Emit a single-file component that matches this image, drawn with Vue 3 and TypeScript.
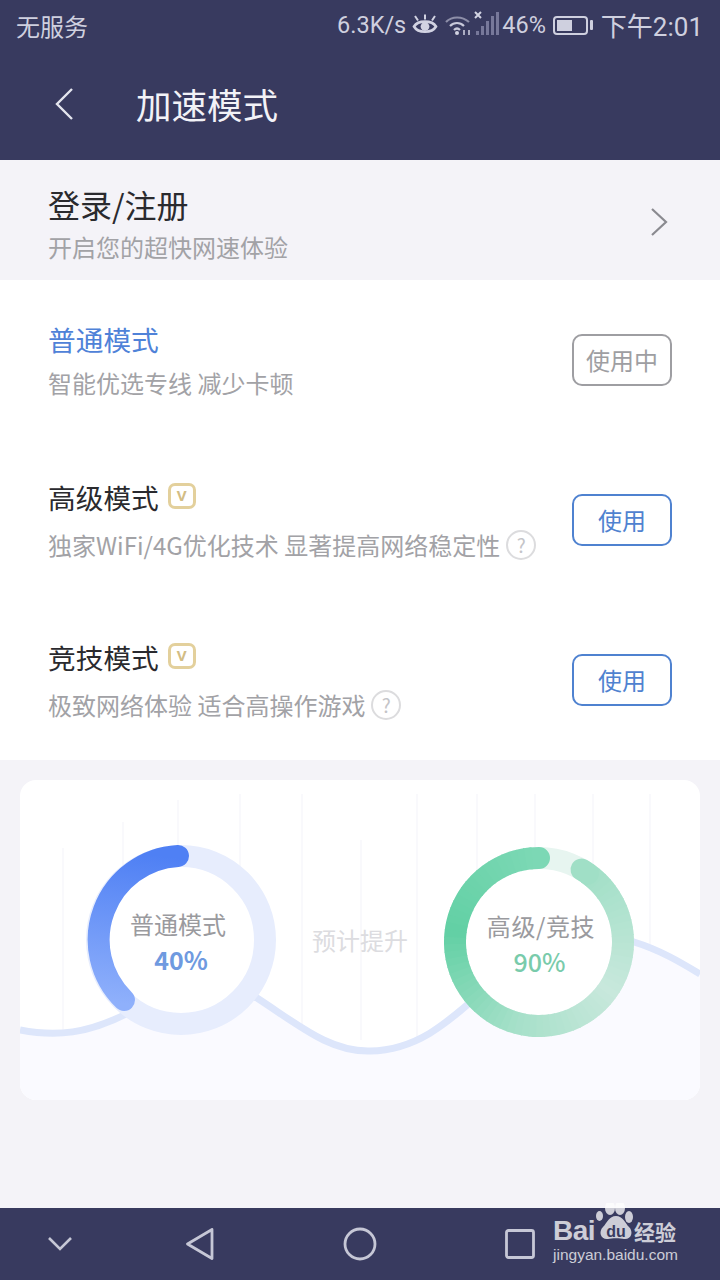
<script setup lang="ts">
interface Mode { title: string; sub: string; btn: string; active: boolean; vip: boolean; help: boolean }
const modes: Mode[] = [
  { title: '普通模式', sub: '智能优选专线 减少卡顿', btn: '使用中', active: true, vip: false, help: false },
  { title: '高级模式', sub: '独家WiFi/4G优化技术 显著提高网络稳定性', btn: '使用', active: false, vip: true, help: true },
  { title: '竞技模式', sub: '极致网络体验 适合高操作游戏', btn: '使用', active: false, vip: true, help: true }
]

type RGB = [number, number, number]
const stops: [number, RGB][] = [
  [0, [124, 216, 181]],
  [0.25, [98, 208, 164]],
  [0.5, [166, 224, 201]],
  [0.72, [200, 232, 220]],
  [1, [160, 223, 198]]
]
function colorAt(t: number): string {
  for (let i = 1; i < stops.length; i++) {
    if (t <= stops[i][0]) {
      const a = stops[i - 1]
      const b = stops[i]
      const k = (t - a[0]) / (b[0] - a[0])
      const c = a[1].map((v, j) => Math.round(v + (b[1][j] - v) * k))
      return `rgb(${c[0]},${c[1]},${c[2]})`
    }
  }
  return 'rgb(160,223,198)'
}
function polar(deg: number, r: number): [number, number] {
  const a = (deg * Math.PI) / 180
  return [96 + r * Math.sin(a), 96 - r * Math.cos(a)]
}
// Counter-clockwise from just after the top round to the upper right
const startDeg = 0
const sweep = 329
const n = 72
const greenSegs = Array.from({ length: n }, (_, i) => {
  const d1 = startDeg - (sweep * i) / n
  const d2 = startDeg - (sweep * (i + 1)) / n - 0.6
  const p1 = polar(d1, 84)
  const p2 = polar(d2, 84)
  return {
    d: `M${p1[0].toFixed(2)} ${p1[1].toFixed(2)}A84 84 0 0 0 ${p2[0].toFixed(2)} ${p2[1].toFixed(2)}`,
    color: colorAt(i / (n - 1)),
    cap: i === 0 || i === n - 1 ? 'round' : 'butt'
  }
})
const gridLines = [
  { x: 43, y: 68 }, { x: 103, y: 42 }, { x: 158, y: 20 }, { x: 220, y: 14 }, { x: 282, y: 14 },
  { x: 341, y: 60 }, { x: 397, y: 14 }, { x: 457, y: 14 }, { x: 515, y: 14 }, { x: 573, y: 14 }, { x: 630, y: 14 }
]
</script>

<template>
  <div class="page">
    <header class="head">
      <div class="status">
        <span class="carrier">无服务</span>
        <span class="status-right">
          <span class="speed">6.3K/s</span>
          <svg class="ic-eye" width="26" height="22" viewBox="0 0 26 22" fill="none" stroke="#d2d3e2" stroke-width="2.6">
            <path d="M2 12.5C6 6 20 6 24 12.5C20 19.5 6 19.5 2 12.5Z" />
            <circle cx="13" cy="12.5" r="4.4" fill="#d2d3e2" stroke="none" />
            <path d="M3 2l3 4.5M13 0.5v5M23 2l-3 4.5" stroke-width="2" />
          </svg>
          <svg class="ic-wifi" width="26" height="22" viewBox="0 0 26 22" fill="none" stroke="#8d8ea8" stroke-width="2.2">
            <path d="M1 8C7 2 17 2 24 8" />
            <path d="M5 12C9 8 15 8 19 12" stroke="#c9cadb" />
            <path d="M9 16C11 14 13 14 15 16" stroke="#c9cadb" />
            <circle cx="12" cy="19" r="2" fill="#d2d3e2" stroke="none" />
            <path d="M19 16v5M24 16v5" stroke="#c9cadb" stroke-width="1.6" />
          </svg>
          <svg class="ic-signal" width="26" height="26" viewBox="0 0 26 26" fill="none">
            <path d="M1 1l6 6M7 1l-6 6" stroke="#d2d3e2" stroke-width="2" />
            <rect x="2" y="20" width="3" height="4" fill="#77789a" />
            <rect x="7" y="15" width="3" height="9" fill="#77789a" />
            <rect x="12" y="10" width="3" height="14" fill="#77789a" />
            <rect x="17" y="5" width="3" height="19" fill="#77789a" />
            <rect x="22" y="1" width="3" height="23" fill="#77789a" />
          </svg>
          <span class="pct">46%</span>
          <span class="battery"><span class="battery-fill"></span></span>
          <span class="battery-tip"></span>
          <span class="clock">下午2:01</span>
        </span>
      </div>
      <div class="bar">
        <svg width="20" height="34" viewBox="0 0 20 34" fill="none" stroke="#e4e5ee" stroke-width="2.4">
          <path d="M18 2L3 17l15 15" />
        </svg>
        <h1 class="bar-title">加速模式</h1>
      </div>
    </header>

    <section class="login">
      <div>
        <div class="login-title">登录/注册</div>
        <div class="login-sub">开启您的超快网速体验</div>
      </div>
      <svg class="login-arrow" width="18" height="30" viewBox="0 0 18 30" fill="none" stroke="#8a8a90" stroke-width="2.2">
        <path d="M2 2l14 13L2 28" />
      </svg>
    </section>

    <section class="modes">
      <div v-for="m in modes" :key="m.title" class="mode">
        <div class="mode-text" :class="{ tight: m.active }">
          <div class="mode-title" :class="{ on: m.active }">
            {{ m.title }}
            <span v-if="m.vip" class="vip">v</span>
          </div>
          <div class="mode-sub">
            {{ m.sub }}
            <span v-if="m.help" class="help">?</span>
          </div>
        </div>
        <button class="use" :class="{ busy: m.active }">{{ m.btn }}</button>
      </div>
    </section>

    <section class="card">
      <svg class="card-bg" width="680" height="320" viewBox="0 0 680 320" fill="none">
        <line v-for="g in gridLines" :key="g.x" :x1="g.x" :x2="g.x" :y1="g.y" y2="260" stroke="#f9f9fc" stroke-width="2" />
        <path d="M0 250C36 257 68 254 110 232C150 206 190 204 237 218C280 246 310 272 350 271C400 270 430 240 470 205C510 175 570 145 614 162C640 170 660 182 680 194V320H0Z" fill="#fafaff" />
        <path d="M0 250C36 257 68 254 110 232C150 206 190 204 237 218C280 246 310 272 350 271C400 270 430 240 470 205C510 175 570 145 614 162C640 170 660 182 680 194" stroke="#dde6fb" stroke-width="7" />
      </svg>

      <div class="ring ring-blue">
        <svg width="192" height="192" viewBox="0 0 192 192" fill="none">
          <defs>
            <linearGradient id="blueArc" gradientUnits="userSpaceOnUse" x1="60" y1="10" x2="40" y2="160">
              <stop offset="0" stop-color="#4f80f4" />
              <stop offset="1" stop-color="#8fb0fb" />
            </linearGradient>
          </defs>
          <circle cx="96" cy="96" r="84" fill="#fff" stroke="#e7edfd" stroke-width="22" />
          <path d="M93 12A84 84 0 0 0 39 156" stroke="url(#blueArc)" stroke-width="22" stroke-linecap="round" />
        </svg>
        <div class="ring-text">
          <div class="ring-label shift">普通模式</div>
          <div class="ring-value blue">40%</div>
        </div>
      </div>

      <div class="expect">预计提升</div>

      <div class="ring ring-green">
        <svg width="192" height="192" viewBox="0 0 192 192" fill="none">
          <circle cx="96" cy="96" r="84" fill="#fff" stroke="#e7f5f0" stroke-width="22" />
          <path v-for="(s, i) in greenSegs" :key="i" :d="s.d" :stroke="s.color" stroke-width="22" :stroke-linecap="s.cap" />
        </svg>
        <div class="ring-text">
          <div class="ring-label wide">高级/竞技</div>
          <div class="ring-value green">90%</div>
        </div>
      </div>
    </section>

    <div class="spacer"></div>

    <nav class="nav">
      <svg width="26" height="16" viewBox="0 0 26 16" fill="none" stroke="#c6c7d6" stroke-width="2.6">
        <path d="M2 2l11 11L24 2" />
      </svg>
      <svg width="30" height="34" viewBox="0 0 30 34" fill="none" stroke="#c6c7d6" stroke-width="2.8" stroke-linejoin="round">
        <path d="M27 2.5L2.5 17 27 31.5Z" />
      </svg>
      <svg width="34" height="34" viewBox="0 0 34 34" fill="none" stroke="#c6c7d6" stroke-width="2.8">
        <circle cx="17" cy="17" r="15" />
      </svg>
      <svg width="30" height="30" viewBox="0 0 30 30" fill="none" stroke="#c6c7d6" stroke-width="2.8">
        <rect x="1.5" y="1.5" width="27" height="27" rx="2" />
      </svg>
    </nav>

    <div class="mark">
      <div class="mark-top">
        <span class="mark-bai">Bai</span>
        <span class="mark-paw">
          <svg width="40" height="40" viewBox="0 0 40 40" fill="rgba(255,255,255,0.75)">
            <ellipse cx="5.5" cy="13" rx="3.5" ry="5" />
            <ellipse cx="16" cy="5" rx="5" ry="7" />
            <ellipse cx="26" cy="5" rx="5" ry="7" />
            <ellipse cx="35" cy="14" rx="4" ry="6" />
            <path d="M22 13C29 13 31 20 35 24C40 29 37 37 30 36C26 35 18 35 14 36C7 37 4 29 9 24C13 20 15 13 22 13Z" />
          </svg>
          <span class="mark-du">du</span>
        </span>
        <span class="mark-cn">经验</span>
      </div>
      <div class="mark-url">jingyan.baidu.com</div>
    </div>
  </div>
</template>

<style>
html, body { margin: 0; padding: 0; }
</style>

<style scoped>
.page {
  position: relative;
  width: 720px;
  height: 1280px;
  overflow: hidden;
  display: flex;
  flex-direction: column;
  background: #f4f3f8;
  font-family: "Noto Sans CJK SC", "Noto Sans", sans-serif;
}
.head { height: 160px; background: #383a5f; flex: none; }
.status {
  height: 52px;
  display: flex;
  align-items: center;
  justify-content: space-between;
  padding: 0 17px 2px 16px;
  box-sizing: border-box;
  color: #cfd0df;
  font-size: 24px;
}
.status-right { display: flex; align-items: center; }
.speed { font-family: Roboto, sans-serif; font-size: 23.5px; margin-right: 6px; }
.ic-wifi { margin-left: 7px; }
.ic-signal { margin-left: 3px; margin-bottom: 3px; }
.pct { font-family: Roboto, sans-serif; font-size: 23.5px; margin-left: 2px; }
.battery {
  width: 35px;
  height: 19px;
  margin-left: 7px;
  border: 2px solid #cfd0df;
  border-radius: 4px;
  padding: 2px;
  box-sizing: border-box;
  display: flex;
}
.battery-fill { width: 15px; background: #cfd0df; }
.battery-tip { width: 3px; height: 10px; margin-left: 2px; background: #cfd0df; border-radius: 1px; }
.clock { margin: 0 0 1px 8px; font-family: Roboto, "Noto Sans CJK SC", sans-serif; font-size: 26px; }
.bar {
  height: 108px;
  display: flex;
  align-items: center;
  padding: 0 0 0 54px;
  box-sizing: border-box;
}
.bar svg { margin-bottom: 4px; }
.bar-title {
  margin: 0 0 5px 62px;
  font-size: 35.5px;
  line-height: 48px;
  font-weight: 400;
  color: #f2f2f7;
}
.login {
  height: 120px;
  flex: none;
  display: flex;
  align-items: center;
  justify-content: space-between;
  padding: 6px 52px 0 48px;
  box-sizing: border-box;
}
.login-title { font-size: 32px; line-height: 44px; color: #2a2a2e; }
.login-sub { font-size: 24px; line-height: 34px; margin-top: 4px; color: #a2a2a6; }
.login-arrow { margin-top: -2px; }
.modes { height: 480px; flex: none; background: #fff; display: flex; flex-direction: column; }
.mode {
  height: 160px;
  flex: none;
  display: flex;
  align-items: center;
  justify-content: space-between;
  padding: 0 48px;
  box-sizing: border-box;
}
.mode-text { display: flex; flex-direction: column; gap: 11px; margin-top: -2px; }
.mode-text.tight { gap: 7px; margin-top: -1px; }
.mode-title {
  display: flex;
  align-items: center;
  font-size: 27.7px;
  line-height: 40px;
  color: #2a2a2e;
}
.mode-title.on { color: #4f82d8; }
.vip {
  width: 28px;
  height: 26px;
  margin: -2px 0 0 9px;
  border: 3px solid #e3d09c;
  border-radius: 7px;
  box-sizing: border-box;
  display: flex;
  align-items: center;
  justify-content: center;
  font-family: "Noto Sans", sans-serif;
  font-size: 18px;
  font-weight: 600;
  line-height: 1;
  padding-bottom: 3px;
  color: #d3bd84;
}
.mode-sub {
  display: flex;
  align-items: center;
  font-size: 24px;
  line-height: 34px;
  color: #a2a2a6;
  white-space: nowrap;
}
.help {
  width: 30px;
  height: 30px;
  margin-left: 6px;
  border: 2px solid #dcdcde;
  border-radius: 50%;
  box-sizing: border-box;
  display: flex;
  align-items: center;
  justify-content: center;
  font-size: 19px;
  line-height: 1;
  color: #c4c4c8;
}
.use {
  width: 100px;
  height: 52px;
  padding: 0;
  background: #fff;
  border: 2px solid #4f82d0;
  border-radius: 10px;
  font: inherit;
  font-size: 24px;
  line-height: 1;
  color: #4f82d0;
}
.use.busy { border-color: #9e9ea2; color: #9e9ea2; }
.card {
  position: relative;
  flex: none;
  height: 320px;
  margin: 20px 20px 0;
  border-radius: 16px;
  background: #fff;
  overflow: hidden;
  display: flex;
  align-items: flex-start;
  padding: 64px 0 0 65px;
  box-sizing: border-box;
}
.card-bg { position: absolute; left: 0; top: 0; }
.ring { position: relative; width: 192px; height: 192px; flex: none; }
.ring svg { display: block; }
.ring-green { margin: 2px 0 0 -0.5px; }
.ring-text {
  position: absolute;
  inset: 2px 0 0;
  display: flex;
  flex-direction: column;
  align-items: center;
  justify-content: center;
}
.ring-label { font-size: 24px; line-height: 34px; color: #9a9a9e; }
.ring-label.shift { margin-right: 6px; }
.ring-label.wide { letter-spacing: 0.6px; margin-left: 5px; }
.ring-value { font-size: 25px; line-height: 34px; margin-top: 1px; }
.ring-value.blue { color: #6f9ae0; font-weight: 700; }
.ring-value.green { color: #79cbab; font-weight: 500; margin-left: 2px; }
.expect {
  position: relative;
  flex: none;
  width: 166px;
  margin-top: 79px;
  text-align: center;
  font-size: 24px;
  line-height: 34px;
  color: #dcdce0;
}
.spacer { flex: 1; }
.nav {
  position: relative;
  height: 72px;
  flex: none;
  background: #383a5f;
  display: grid;
  grid-template-columns: 120px 160px 160px 1fr;
  align-items: center;
  justify-items: center;
}
.nav svg:nth-child(4) { justify-self: start; margin-left: 65px; }
.mark {
  position: absolute;
  left: 553px;
  top: 1203px;
  color: rgba(255, 255, 255, 0.75);
  pointer-events: none;
}
.mark-top { display: flex; align-items: flex-end; height: 42px; }
.mark-bai {
  width: 41px;
  font-family: "Liberation Sans", sans-serif;
  font-weight: 700;
  font-size: 28px;
  line-height: 28px;
  letter-spacing: -0.5px;
}
.mark-paw { position: relative; width: 40px; height: 40px; margin: 0 0 2px 0; }
.mark-paw svg { display: block; }
.mark-du {
  position: absolute;
  left: 4px;
  right: 0;
  bottom: 3px;
  text-align: center;
  font-family: "Liberation Sans", sans-serif;
  font-weight: 700;
  font-size: 16px;
  line-height: 16px;
  color: #383a5f;
}
.mark-cn { font-size: 21px; line-height: 28px; font-weight: 700; }
.mark-url {
  font-family: "Liberation Sans", sans-serif;
  font-size: 15.5px;
  line-height: 20px;
  white-space: nowrap;
}
</style>
